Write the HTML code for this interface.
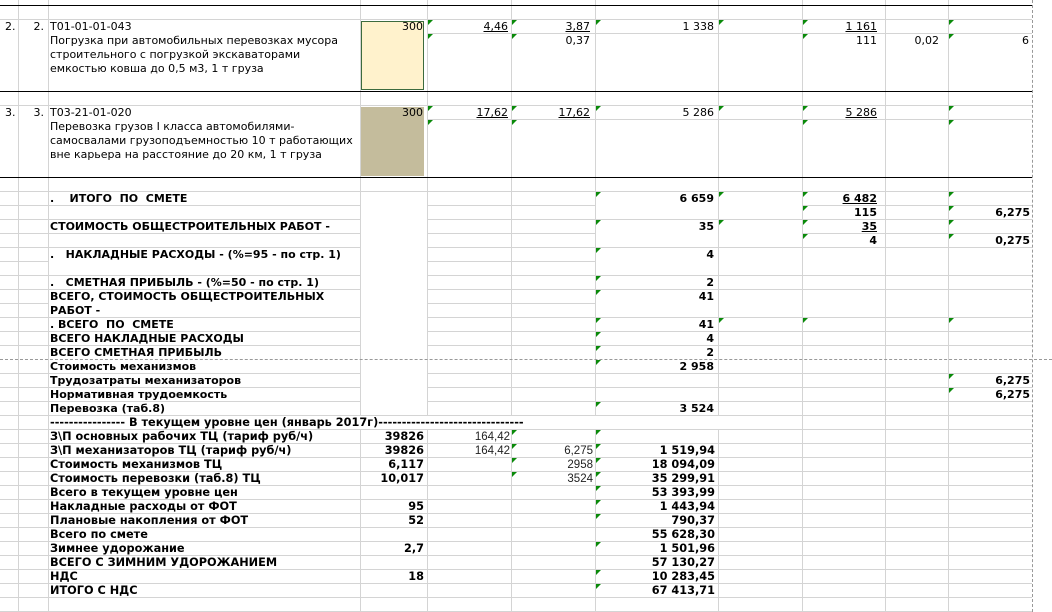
<!DOCTYPE html>
<html><head><meta charset="utf-8">
<style>
html,body{margin:0;padding:0;background:#fff;}
body{width:1052px;height:612px;position:relative;overflow:hidden;}
.t{position:absolute;white-space:nowrap;font-family:"DejaVu Sans","Liberation Sans",sans-serif;font-size:11px;line-height:14px;color:#000;margin-top:1px;}
.b{font-weight:bold;}
.lb{font-family:"DejaVu Sans",sans-serif;font-weight:bold;font-size:11.3px;}
.n{font-family:"Liberation Sans",sans-serif;font-size:11.5px;color:#222;}
.u{text-decoration:underline;}
.v{position:absolute;top:0;height:612px;width:1px;background:#d4d4d4;}
.h{position:absolute;height:1px;background:#d4d4d4;}
.k{position:absolute;height:1px;background:#000;left:0;width:1032px;}
.g{position:absolute;width:0;height:0;border-top:5px solid #0a8a0a;border-right:5px solid transparent;}
</style></head><body>

<div class="v" style="left:18px"></div>
<div class="v" style="left:48px"></div>
<div class="v" style="left:360px"></div>
<div class="v" style="left:427px"></div>
<div class="v" style="left:511px"></div>
<div class="v" style="left:595px"></div>
<div class="v" style="left:718px"></div>
<div class="v" style="left:802px"></div>
<div class="v" style="left:885px"></div>
<div class="v" style="left:948px"></div>
<div style="position:absolute;left:1032px;top:0;height:612px;border-left:1px dashed #999"></div>

<div class="k" style="top:5px"></div>
<div class="h" style="top:19px;left:0;width:1032px"></div>
<div class="h" style="top:33px;left:427px;width:605px"></div>
<div class="k" style="top:91px"></div>
<div class="h" style="top:105px;left:0;width:1032px"></div>
<div class="h" style="top:119px;left:427px;width:605px"></div>
<div class="k" style="top:177px"></div>
<div class="h" style="top:191px;left:0;width:1032px"></div>

<div class="h" style="top:205px;left:0;width:360px"></div><div class="h" style="top:205px;left:427px;width:168px"></div><div class="h" style="top:205px;left:802px;width:230px"></div>
<div class="h" style="top:219px;left:0;width:360px"></div><div class="h" style="top:219px;left:427px;width:605px"></div>
<div class="h" style="top:233px;left:0;width:360px"></div><div class="h" style="top:233px;left:427px;width:168px"></div><div class="h" style="top:233px;left:802px;width:230px"></div>
<div class="h" style="top:247px;left:0;width:360px"></div><div class="h" style="top:247px;left:427px;width:605px"></div>
<div class="h" style="top:261px;left:0;width:48px"></div><div class="h" style="top:261px;left:427px;width:168px"></div>
<div class="h" style="top:275px;left:0;width:360px"></div><div class="h" style="top:275px;left:427px;width:605px"></div>
<div class="h" style="top:289px;left:0;width:360px"></div><div class="h" style="top:289px;left:427px;width:605px"></div>
<div class="h" style="top:303px;left:0;width:48px"></div><div class="h" style="top:303px;left:427px;width:168px"></div>
<div class="h" style="top:317px;left:0;width:360px"></div><div class="h" style="top:317px;left:427px;width:605px"></div>
<div class="h" style="top:331px;left:0;width:360px"></div><div class="h" style="top:331px;left:427px;width:605px"></div>
<div class="h" style="top:345px;left:0;width:360px"></div><div class="h" style="top:345px;left:427px;width:605px"></div>
<div style="position:absolute;top:359px;left:0;width:1052px;border-top:1px dashed #999"></div>
<div class="h" style="top:373px;left:0;width:360px"></div><div class="h" style="top:373px;left:427px;width:605px"></div>
<div class="h" style="top:387px;left:0;width:360px"></div><div class="h" style="top:387px;left:427px;width:605px"></div>
<div class="h" style="top:401px;left:0;width:360px"></div><div class="h" style="top:401px;left:427px;width:605px"></div>
<div class="h" style="top:415px;left:0;width:1032px"></div>
<div style="position:absolute;left:49px;top:416px;width:753px;height:13px;background:#fff"></div>
<div class="h" style="top:429px;left:0;width:1032px"></div>
<div class="h" style="top:443px;left:0;width:1032px"></div>
<div class="h" style="top:457px;left:0;width:1032px"></div>
<div class="h" style="top:471px;left:0;width:1032px"></div>
<div class="h" style="top:485px;left:0;width:1032px"></div>
<div class="h" style="top:499px;left:0;width:1032px"></div>
<div class="h" style="top:513px;left:0;width:1032px"></div>
<div class="h" style="top:527px;left:0;width:1032px"></div>
<div class="h" style="top:541px;left:0;width:1032px"></div>
<div class="h" style="top:555px;left:0;width:1032px"></div>
<div class="h" style="top:569px;left:0;width:1032px"></div>
<div class="h" style="top:583px;left:0;width:1032px"></div>
<div class="h" style="top:597px;left:0;width:1032px"></div>
<div class="h" style="top:611px;left:0;width:1032px"></div>

<div style="position:absolute;left:361px;top:21px;width:61px;height:67px;background:#fff2cc;border:1px solid #3d6b3d"></div>
<div style="position:absolute;left:361px;top:107px;width:63px;height:69px;background:#c4bc9c;"></div>

<div class="t" style="left:5px;top:19px">2.</div>
<div class="t" style="right:1008px;top:19px">2.</div>
<div class="t" style="left:50px;top:19px">T01-01-01-043</div>
<div class="t" style="left:50px;top:33px">Погрузка при автомобильных перевозках мусора</div>
<div class="t" style="left:50px;top:47px">строительного с погрузкой экскаваторами</div>
<div class="t" style="left:50px;top:61px">емкостью ковша до 0,5 м3, 1 т груза</div>
<div class="t" style="right:629px;top:19px">300</div>
<div class="t u" style="right:544px;top:19px">4,46</div>
<div class="t u" style="right:462px;top:19px">3,87</div>
<div class="t" style="right:462px;top:33px">0,37</div>
<div class="t" style="right:338px;top:19px">1 338</div>
<div class="t u" style="right:175px;top:19px">1 161</div>
<div class="t" style="right:175px;top:33px">111</div>
<div class="t" style="right:113px;top:33px">0,02</div>
<div class="t" style="right:23px;top:33px">6</div>

<div class="t" style="left:5px;top:105px">3.</div>
<div class="t" style="right:1008px;top:105px">3.</div>
<div class="t" style="left:50px;top:105px">T03-21-01-020</div>
<div class="t" style="left:50px;top:119px">Перевозка грузов I класса автомобилями-</div>
<div class="t" style="left:50px;top:133px">самосвалами грузоподъемностью 10 т работающих</div>
<div class="t" style="left:50px;top:147px">вне карьера на расстояние до 20 км, 1 т груза</div>
<div class="t" style="right:629px;top:105px">300</div>
<div class="t u" style="right:544px;top:105px">17,62</div>
<div class="t u" style="right:462px;top:105px">17,62</div>
<div class="t" style="right:338px;top:105px">5 286</div>
<div class="t u" style="right:175px;top:105px">5 286</div>

<div class="t b" style="left:50px;top:191px">.&nbsp;&nbsp;&nbsp; ИТОГО&nbsp; ПО&nbsp; СМЕТЕ</div>
<div class="t b" style="left:50px;top:219px">СТОИМОСТЬ ОБЩЕСТРОИТЕЛЬНЫХ РАБОТ -</div>
<div class="t b" style="left:50px;top:247px">.&nbsp;&nbsp; НАКЛАДНЫЕ РАСХОДЫ - (%=95 - по стр. 1)</div>
<div class="t b" style="left:50px;top:275px">.&nbsp;&nbsp; СМЕТНАЯ ПРИБЫЛЬ - (%=50 - по стр. 1)</div>
<div class="t b" style="left:50px;top:289px">ВСЕГО, СТОИМОСТЬ ОБЩЕСТРОИТЕЛЬНЫХ</div>
<div class="t b" style="left:50px;top:303px">РАБОТ -</div>
<div class="t b" style="left:50px;top:317px">. ВСЕГО&nbsp; ПО&nbsp; СМЕТЕ</div>
<div class="t b" style="left:50px;top:331px">ВСЕГО НАКЛАДНЫЕ РАСХОДЫ</div>
<div class="t b" style="left:50px;top:345px">ВСЕГО СМЕТНАЯ ПРИБЫЛЬ</div>
<div class="t b" style="left:50px;top:359px">Стоимость механизмов</div>
<div class="t b" style="left:50px;top:373px">Трудозатраты механизаторов</div>
<div class="t b" style="left:50px;top:387px">Нормативная трудоемкость</div>
<div class="t b" style="left:50px;top:401px">Перевозка (таб.8)</div>

<div class="t b" style="right:338px;top:191px">6 659</div>
<div class="t b u" style="right:175px;top:191px">6 482</div>
<div class="t b" style="right:175px;top:205px">115</div>
<div class="t b" style="right:22px;top:205px">6,275</div>
<div class="t b" style="right:338px;top:219px">35</div>
<div class="t b u" style="right:175px;top:219px">35</div>
<div class="t b" style="right:175px;top:233px">4</div>
<div class="t b" style="right:22px;top:233px">0,275</div>
<div class="t b" style="right:338px;top:247px">4</div>
<div class="t b" style="right:338px;top:275px">2</div>
<div class="t b" style="right:338px;top:289px">41</div>
<div class="t b" style="right:338px;top:317px">41</div>
<div class="t b" style="right:338px;top:331px">4</div>
<div class="t b" style="right:338px;top:345px">2</div>
<div class="t b" style="right:338px;top:359px">2 958</div>
<div class="t b" style="right:22px;top:373px">6,275</div>
<div class="t b" style="right:22px;top:387px">6,275</div>
<div class="t b" style="right:338px;top:401px">3 524</div>

<div class="t lb" style="left:50px;top:415px">---------------- В текущем уровне цен (январь 2017г)-------------------------------</div>
<div class="t lb" style="left:50px;top:429px">З\П основных рабочих ТЦ (тариф руб/ч)</div>
<div class="t lb" style="left:50px;top:443px">З\П механизаторов ТЦ (тариф руб/ч)</div>
<div class="t lb" style="left:50px;top:457px">Стоимость механизмов ТЦ</div>
<div class="t lb" style="left:50px;top:471px">Стоимость перевозки (таб.8) ТЦ</div>
<div class="t lb" style="left:50px;top:485px">Всего в текущем уровне цен</div>
<div class="t lb" style="left:50px;top:499px">Накладные расходы от ФОТ</div>
<div class="t lb" style="left:50px;top:513px">Плановые накопления от ФОТ</div>
<div class="t lb" style="left:50px;top:527px">Всего по смете</div>
<div class="t lb" style="left:50px;top:541px">Зимнее удорожание</div>
<div class="t lb" style="left:50px;top:555px">ВСЕГО С ЗИМНИМ УДОРОЖАНИЕМ</div>
<div class="t lb" style="left:50px;top:569px">НДС</div>
<div class="t lb" style="left:50px;top:583px">ИТОГО С НДС</div>

<div class="t lb" style="right:628px;top:429px">39826</div>
<div class="t lb" style="right:628px;top:443px">39826</div>
<div class="t lb" style="right:628px;top:457px">6,117</div>
<div class="t lb" style="right:628px;top:471px">10,017</div>
<div class="t lb" style="right:628px;top:499px">95</div>
<div class="t lb" style="right:628px;top:513px">52</div>
<div class="t lb" style="right:628px;top:541px">2,7</div>
<div class="t lb" style="right:628px;top:569px">18</div>

<div class="t n" style="right:542px;top:429px">164,42</div>
<div class="t n" style="right:542px;top:443px">164,42</div>
<div class="t n" style="right:459px;top:443px">6,275</div>
<div class="t n" style="right:459px;top:457px">2958</div>
<div class="t n" style="right:459px;top:471px">3524</div>

<div class="t lb" style="right:337px;top:443px">1 519,94</div>
<div class="t lb" style="right:337px;top:457px">18 094,09</div>
<div class="t lb" style="right:337px;top:471px">35 299,91</div>
<div class="t lb" style="right:337px;top:485px">53 393,99</div>
<div class="t lb" style="right:337px;top:499px">1 443,94</div>
<div class="t lb" style="right:337px;top:513px">790,37</div>
<div class="t lb" style="right:337px;top:527px">55 628,30</div>
<div class="t lb" style="right:337px;top:541px">1 501,96</div>
<div class="t lb" style="right:337px;top:555px">57 130,27</div>
<div class="t lb" style="right:337px;top:569px">10 283,45</div>
<div class="t lb" style="right:337px;top:583px">67 413,71</div>

<div class="g" style="left:428px;top:20px"></div><div class="g" style="left:428px;top:34px"></div>
<div class="g" style="left:512px;top:20px"></div><div class="g" style="left:512px;top:34px"></div>
<div class="g" style="left:596px;top:20px"></div><div class="g" style="left:719px;top:20px"></div>
<div class="g" style="left:803px;top:20px"></div><div class="g" style="left:803px;top:34px"></div>
<div class="g" style="left:949px;top:20px"></div><div class="g" style="left:949px;top:34px"></div>

<div class="g" style="left:428px;top:106px"></div><div class="g" style="left:428px;top:120px"></div>
<div class="g" style="left:512px;top:106px"></div><div class="g" style="left:512px;top:120px"></div>
<div class="g" style="left:596px;top:106px"></div><div class="g" style="left:719px;top:106px"></div>
<div class="g" style="left:803px;top:106px"></div><div class="g" style="left:803px;top:120px"></div>
<div class="g" style="left:949px;top:106px"></div><div class="g" style="left:949px;top:120px"></div>

<div class="g" style="left:596px;top:192px"></div><div class="g" style="left:719px;top:192px"></div>
<div class="g" style="left:803px;top:192px"></div><div class="g" style="left:949px;top:192px"></div>
<div class="g" style="left:803px;top:206px"></div><div class="g" style="left:949px;top:206px"></div>
<div class="g" style="left:596px;top:220px"></div><div class="g" style="left:719px;top:220px"></div>
<div class="g" style="left:803px;top:220px"></div><div class="g" style="left:949px;top:220px"></div>
<div class="g" style="left:803px;top:234px"></div><div class="g" style="left:949px;top:234px"></div>
<div class="g" style="left:596px;top:248px"></div>
<div class="g" style="left:596px;top:276px"></div>
<div class="g" style="left:596px;top:290px"></div>
<div class="g" style="left:596px;top:318px"></div><div class="g" style="left:719px;top:318px"></div>
<div class="g" style="left:803px;top:318px"></div><div class="g" style="left:949px;top:318px"></div>
<div class="g" style="left:596px;top:332px"></div>
<div class="g" style="left:596px;top:346px"></div>
<div class="g" style="left:596px;top:360px"></div>
<div class="g" style="left:949px;top:374px"></div>
<div class="g" style="left:949px;top:388px"></div>
<div class="g" style="left:596px;top:402px"></div>

<div class="g" style="left:512px;top:430px"></div><div class="g" style="left:596px;top:430px"></div>
<div class="g" style="left:512px;top:444px"></div><div class="g" style="left:596px;top:444px"></div>
<div class="g" style="left:512px;top:458px"></div><div class="g" style="left:596px;top:458px"></div>
<div class="g" style="left:512px;top:472px"></div><div class="g" style="left:596px;top:472px"></div>
<div class="g" style="left:596px;top:486px"></div>
<div class="g" style="left:596px;top:500px"></div>
<div class="g" style="left:596px;top:514px"></div>
<div class="g" style="left:596px;top:542px"></div>
<div class="g" style="left:596px;top:570px"></div>
<div class="g" style="left:596px;top:584px"></div>

</body></html>
